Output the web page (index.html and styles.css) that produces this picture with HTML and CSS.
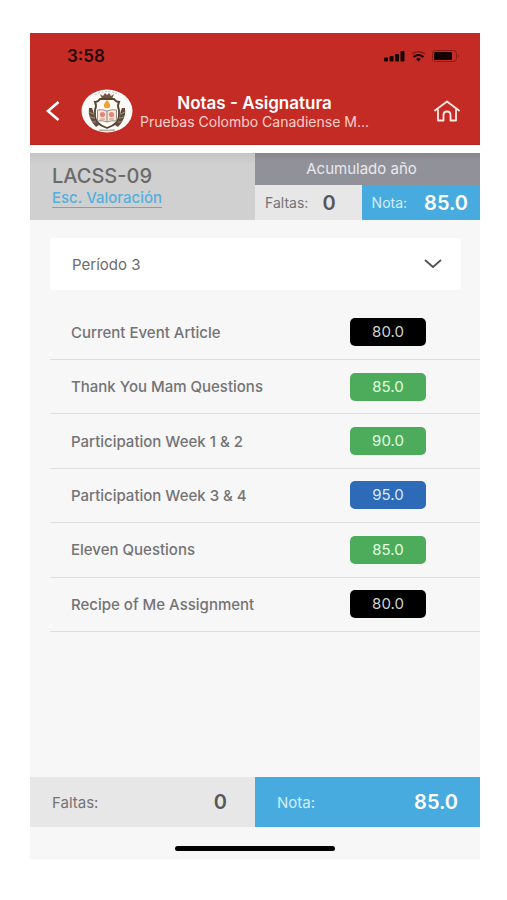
FILE: index.html
```html
<!DOCTYPE html>
<html lang="es">
<head>
<meta charset="utf-8">
<meta name="viewport" content="width=device-width, initial-scale=1">
<title>Notas - Asignatura</title>
<link rel="stylesheet" href="styles.css">
</head>
<body>
<div class="screen">
  <header class="header">
    <div class="status">
      <span class="clock">3:58</span>
      <svg class="status-icons" width="78" height="14" viewBox="0 0 78 14" aria-hidden="true">
        <g fill="#170202">
          <rect x="2" y="8.500" width="4" height="4" rx="1"/>
          <rect x="7.500" y="7" width="4" height="5.500" rx="1"/>
          <rect x="13" y="5" width="4" height="7.500" rx="1"/>
          <rect x="18.500" y="2" width="4" height="10.500" rx="1"/>
          <path d="M34 10 Q36.500 8 39 10 L36.500 12.500Z"/>
          <rect x="52" y="3" width="18" height="8" rx="1.500"/>
        </g>
        <path d="M31.500 8Q36.500 4 41.500 8" fill="none" stroke="#170202" stroke-width="2"/>
        <path d="M30 4.800Q36.500.5 43 4.800" fill="none" stroke="#8d1a17" stroke-width="1.500"/>
        <rect x="50.500" y="1.500" width="24" height="11" rx="3" fill="none" stroke="#8d1a17"/>
        <path d="M76 5.500v3q2-1.500 0-3" fill="#8d1a17"/>
      </svg>
    </div>
    <div class="nav">
      <button class="icon-button" type="button" aria-label="Volver">
        <svg width="16" height="22" viewBox="0 0 16 22"><path d="M13.500 2 3 11l10.500 9" fill="none" stroke="#fff" stroke-width="2.600"/></svg>
      </button>
      <svg class="crest" width="52" height="44" viewBox="0 0 52 44" aria-hidden="true">
        <ellipse cx="26" cy="22" rx="25.500" ry="21.500" fill="#fdfaf7"/>
        <path d="M14 6Q26-1 38 6" fill="none" stroke="#c9bcb0" stroke-dasharray="2 1.500"/>
        <path d="M19 5l3 2 2-3 2 2 2-2 2 3 3-2-2 5H21Z" fill="#725440"/>
        <path d="M8 19q-1 5 1 10t6 9l3-2q-5-5-5-9t-2-8ZM44 19q1 5-1 10t-6 9l-3-2q5-5 5-9t2-8Z" fill="#5f4c3a"/>
        <path d="M8 23l4 2M9 28l4 1M11 33l4 0M44 23l-4 2M43 28l-4 1M41 33l-4 0" stroke="#a39280"/>
        <path d="M14 13q3 0 5-3h14q2 3 5 3-2 4 0 8v6q0 8-12 12-12-4-12-12v-6q2-4 0-8Z" fill="#fffaf4" stroke="#514232" stroke-width="1.800"/>
        <path d="M26 11q5 5 2 8h-4q-3-3 2-8Z" fill="#eda334"/>
        <path d="M16.500 21q5-1 9.500 1 4.500-2 9.500-1v11q-5-1-9.500 1-4.500-2-9.500-1Z" fill="#f8e5dd" stroke="#9b8b83"/>
        <path d="M26 22v11" stroke="#8f8074"/>
        <circle cx="21.500" cy="25.500" r="2.600" fill="#e68774"/>
        <circle cx="30.500" cy="25.500" r="2.600" fill="#e68774"/>
        <path d="M19 30h5M28 30h5" stroke="#ce8a7c"/>
        <path d="M18 41q8 1 16 0" fill="none" stroke="#b8aca0" stroke-width="1.500"/>
      </svg>
      <div class="titles">
        <h1 class="title">Notas - Asignatura</h1>
        <p class="subtitle">Pruebas Colombo Canadiense M...</p>
      </div>
      <button class="icon-button" type="button" aria-label="Inicio">
        <svg width="26" height="22" viewBox="0 0 26 22"><path d="M1 10.500 13 1.500l12 9M4 10v10.500h5.500V15q0-3.500 3.500-3.500t3.500 3.500v5.500H22V10" fill="none" stroke="#ffeae6" stroke-width="1.800" stroke-linejoin="round" stroke-linecap="round"/></svg>
      </button>
    </div>
  </header>

  <section class="summary">
    <div class="course">
      <h2 class="course-name">LACSS-09</h2>
      <a class="scale-link" href="#">Esc. Valoración</a>
    </div>
    <div class="year">
      <h3 class="year-title">Acumulado año</h3>
      <div class="year-values">
        <div class="year-cell absences"><span>Faltas:</span><strong>0</strong></div>
        <div class="year-cell grade"><span>Nota:</span><strong>85.0</strong></div>
      </div>
    </div>
  </section>

  <main class="content">
    <div class="period">
      <select class="period-select" aria-label="Período">
        <option>Período 3</option>
      </select>
      <svg class="chevron" width="18" height="10" viewBox="0 0 18 10" aria-hidden="true"><path d="M1 1l8 7 8-7" fill="none" stroke="#505052" stroke-width="1.700"/></svg>
    </div>
    <table class="grades">
      <tbody>
        <tr><th scope="row">Current Event Article</th><td><span class="score low">80.0</span></td></tr>
        <tr><th scope="row">Thank You Mam Questions</th><td><span class="score good">85.0</span></td></tr>
        <tr><th scope="row">Participation Week 1 &amp; 2</th><td><span class="score good">90.0</span></td></tr>
        <tr><th scope="row">Participation Week 3 &amp; 4</th><td><span class="score top">95.0</span></td></tr>
        <tr><th scope="row">Eleven Questions</th><td><span class="score good">85.0</span></td></tr>
        <tr><th scope="row">Recipe of Me Assignment</th><td><span class="score low">80.0</span></td></tr>
      </tbody>
    </table>
  </main>

  <footer class="totals">
    <div class="total absences"><span>Faltas:</span><strong>0</strong></div>
    <div class="total grade"><span>Nota:</span><strong>85.0</strong></div>
  </footer>
  <div class="home-bar"></div>
</div>
</body>
</html>
```
FILE: styles.css
```css
* { box-sizing: border-box; }

body {
  margin: 0;
  min-height: 100vh;
  display: flex;
  padding: 33px 27px 41px 30px;
  background: #fff;
  color: #737375;
  font-family: Inter, "Liberation Sans", sans-serif;
  font-size: 15px;
}

h1, h2, h3, p { margin: 0; }

.screen {
  flex: 1;
  min-width: 0;
  display: flex;
  flex-direction: column;
  background: #f7f7f7;
}

.header {
  padding: 12px 20px 11px 15px;
  background: #c42b25;
  border-bottom: 1px solid #b52620;
}

.status {
  display: flex;
  align-items: center;
  justify-content: space-between;
  height: 22px;
  padding-left: 22px;
}

.clock {
  color: #250404;
  font-size: 17px;
  font-weight: 600;
}

.nav {
  display: flex;
  align-items: center;
  height: 66px;
  padding-top: 22px;
}

.icon-button {
  display: flex;
  padding: 0;
  border: 0;
  background: none;
  cursor: pointer;
}

.crest { margin-left: 20px; }

.titles {
  flex: 1;
  min-width: 0;
  padding-right: 58px;
  text-align: center;
  white-space: nowrap;
}

.title {
  color: #fff;
  font-size: 17px;
  font-weight: 600;
  line-height: 20px;
}

.subtitle {
  color: #ffd0cb;
  font-size: 14px;
  line-height: 17px;
}

.summary {
  display: grid;
  grid-template-columns: 1fr 1fr;
  height: 75px;
  border-top: 8px solid #fff;
}

.course {
  padding: 11px 22px 0;
  background: linear-gradient(#c4c4c4, #d0d0d0 12px);
}

.course-name {
  color: #6a6a6a;
  font-size: 20px;
  font-weight: 500;
  line-height: 24px;
}

.scale-link {
  display: inline-block;
  border-bottom: 1px solid #55afdc;
  color: #55afdc;
  font-weight: 500;
  line-height: 18px;
  text-decoration: none;
}

.year {
  display: flex;
  flex-direction: column;
}

.year-title {
  padding-right: 12px;
  background: linear-gradient(#85858d, #91919a 8px);
  color: #e9e9ed;
  font-size: 15px;
  font-weight: 400;
  line-height: 32px;
  text-align: center;
}

.year-values {
  flex: 1;
  display: grid;
  grid-template-columns: 9fr 10fr;
}

.year-cell {
  display: flex;
  align-items: center;
  justify-content: space-between;
  font-size: 14px;
}

.year-cell strong,
.total strong {
  font-size: 20px;
  font-weight: 600;
}

.absences {
  background: #e7e7e7;
  color: #737375;
}

.absences strong { color: #575759; }

.grade {
  background: #48abe0;
  color: #cfefff;
}

.grade strong { color: #fff; }

.year-cell.absences { padding: 0 26px 0 10px; }
.year-cell.grade { padding: 0 12px 0 10px; }

.content {
  flex: 1;
  padding: 18px 0 0 20px;
}

.period {
  position: relative;
  margin-right: 19px;
}

.period-select {
  appearance: none;
  display: block;
  width: 100%;
  height: 52px;
  padding: 0 48px 0 22px;
  border: 0;
  border-radius: 2px;
  background: #fff;
  color: #6c6c6e;
  font: inherit;
}

.chevron {
  position: absolute;
  top: 21px;
  right: 19px;
  pointer-events: none;
}

.grades {
  width: 100%;
  height: 326px;
  margin-top: 16px;
  border-collapse: collapse;
}

.grades th,
.grades td {
  padding: 0;
  border-bottom: 1px solid #dedee0;
}

.grades th {
  padding-left: 21px;
  font-weight: 500;
  text-align: left;
}

.grades td { width: 130px; }

.score {
  display: block;
  width: 76px;
  border-radius: 5px;
  line-height: 28px;
  text-align: center;
}

.low { background: #000; color: #d2d2d2; }
.good { background: #4dac5b; color: #e0ffe2; }
.top { background: #2d6bb9; color: #d8eaff; }

.totals {
  display: grid;
  grid-template-columns: 1fr 1fr;
  height: 50px;
}

.total {
  display: flex;
  align-items: center;
  justify-content: space-between;
  padding: 0 22px;
}

.total.absences { padding-right: 28px; }

.home-bar {
  width: 160px;
  height: 5px;
  margin: 19px auto 8px;
  border-radius: 3px;
  background: #000;
}
```
